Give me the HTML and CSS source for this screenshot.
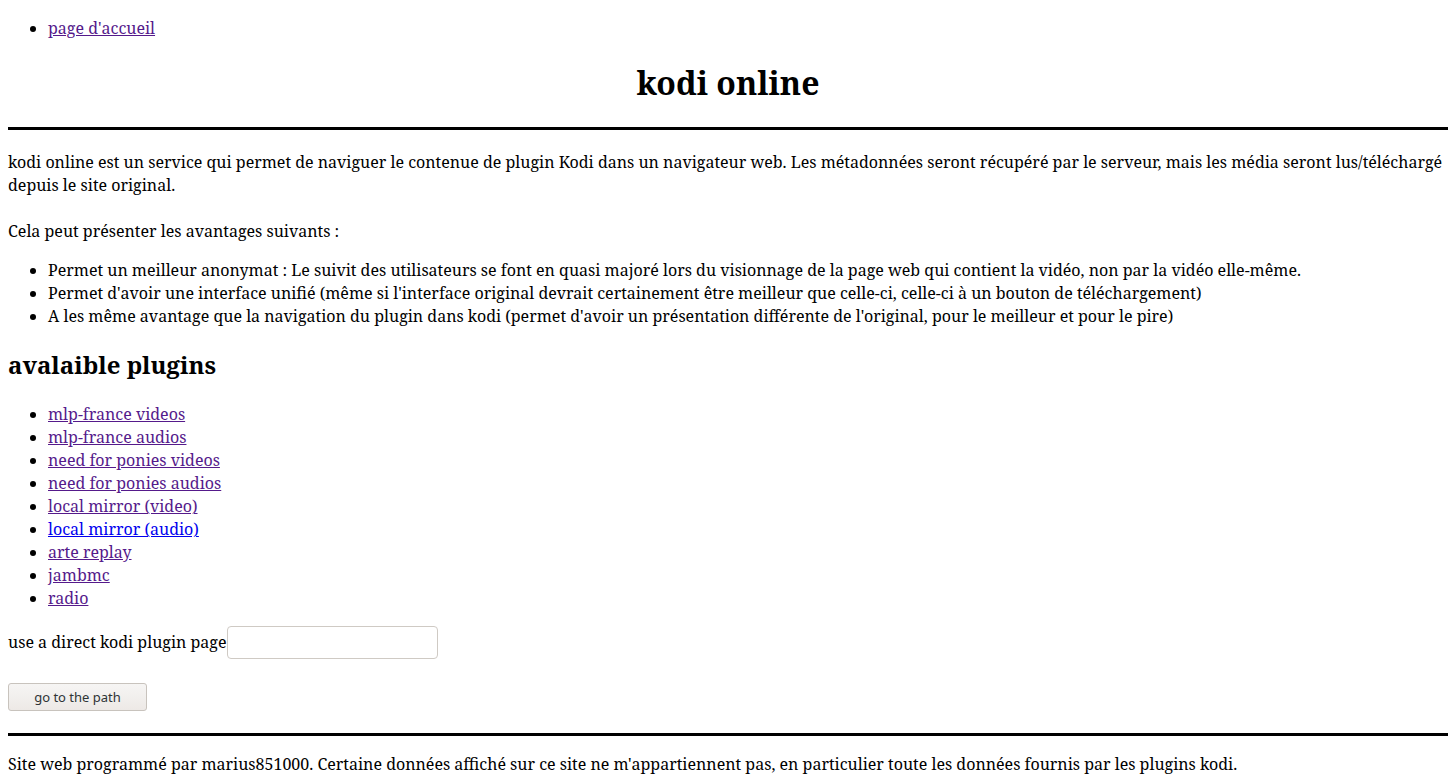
FILE: index.html
```html
<!DOCTYPE html>
<html lang="fr">
<head>
<meta charset="utf-8">
<title>kodi online</title>
<link rel="stylesheet" href="styles.css">
</head>
<body>
<ul class="nav">
  <li><a class="visited" href="#">page d'accueil</a></li>
</ul>
<h1 class="title">kodi online</h1>
<hr class="rule rule-top">
<p class="intro">kodi online est un service qui permet de naviguer le contenue de plugin Kodi dans un navigateur web. Les métadonnées seront récupéré par le serveur, mais les média seront lus/téléchargé depuis le site original.<br><br>Cela peut présenter les avantages suivants :</p>
<ul class="list">
  <li>Permet un meilleur anonymat : Le suivit des utilisateurs se font en quasi majoré lors du visionnage de la page web qui contient la vidéo, non par la vidéo elle-même.</li>
  <li>Permet d'avoir une interface unifié (même si l'interface original devrait certainement être meilleur que celle-ci, celle-ci à un bouton de téléchargement)</li>
  <li>A les même avantage que la navigation du plugin dans kodi (permet d'avoir un présentation différente de l'original, pour le meilleur et pour le pire)</li>
</ul>
<h2 class="subtitle">avalaible plugins</h2>
<ul class="list">
  <li><a class="visited" href="#">mlp-france videos</a></li>
  <li><a class="visited" href="#">mlp-france audios</a></li>
  <li><a class="visited" href="#">need for ponies videos</a></li>
  <li><a class="visited" href="#">need for ponies audios</a></li>
  <li><a class="visited" href="#">local mirror (video)</a></li>
  <li><a class="fresh" href="#">local mirror (audio)</a></li>
  <li><a class="visited" href="#">arte replay</a></li>
  <li><a class="visited" href="#">jambmc</a></li>
  <li><a class="visited" href="#">radio</a></li>
</ul>
<form class="direct">
  <div class="row row-input"><label for="path">use a direct kodi plugin page</label><input id="path" class="field" type="text"></div>
  <div class="row row-button"><button class="btn" type="button">go to the path</button></div>
</form>
<hr class="rule rule-bottom">
<p class="footer">Site web programmé par marius851000. Certaine données affiché sur ce site ne m'appartiennent pas, en particulier toute les données fournis par les plugins kodi.</p>
</body>
</html>
```
FILE: styles.css
```css
html, body {
  font-family: "Noto Serif", "DejaVu Serif", "Liberation Serif", serif;
  font-size: 16px;
  line-height: 23px;
  color: #000;
  background: #fff;
}
body { margin: 0; padding: 8px; }
a.visited { color: #551a8b; }
a.fresh { color: #0000ee; }
.nav { margin: 9px 0 16px; padding-left: 40px; }
.title { text-align: center; font-size: 32px; line-height: 44px; margin: 21.44px 0; }
.rule { border: none; border-top: 3px solid #000; height: 0; }
.rule-top { margin: 22px 0 0; }
.rule-bottom { margin: 22px 0 0; }
.intro { margin: 21px 0 16px; }
.list { margin: 16px 0; padding-left: 40px; }
.subtitle { font-size: 24px; line-height: normal; margin: 20px 0 22px; }
.direct { margin: 0 0 22px; }
.row { display: flex; align-items: center; }
.row-input { margin-top: 14px; height: 32px; }
.row-button { margin-top: 25px; }
.field {
  width: 211px; height: 33px; box-sizing: border-box; margin: 0;
  border: 1px solid #cfcac4; border-radius: 4px; background: #fff;
}
.btn {
  width: 139px; height: 28px; margin: 0; padding: 0;
  font-family: "Noto Sans", "Open Sans", sans-serif; font-size: 13px; color: #2e3436;
  border: 1px solid #c8c3bd; border-radius: 3px;
  background: linear-gradient(#f6f5f4, #ede9e6);
}
.footer { margin: 17px 0 16px; }
```
